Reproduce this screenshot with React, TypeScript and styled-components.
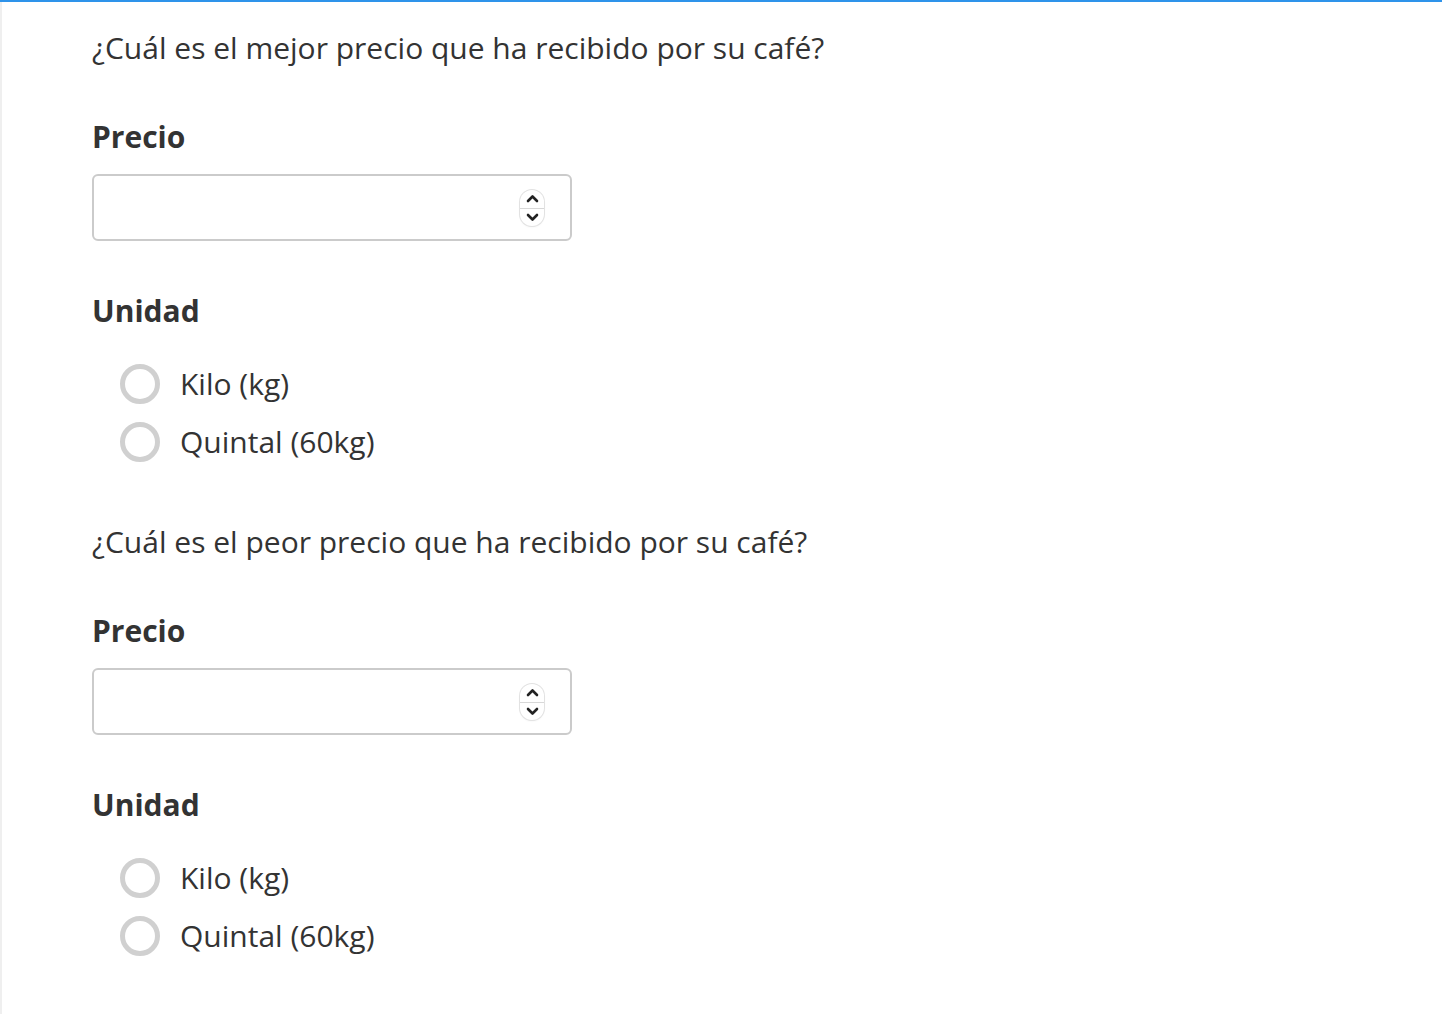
import React from "react";
import styled, { createGlobalStyle } from "styled-components";

const Global = createGlobalStyle`
  html, body { margin: 0; padding: 0; background: #fff; }
  body { font-family: "Open Sans", "Liberation Sans", sans-serif; color: #333; }
`;

const Page = styled.div`
  min-height: 1014px;
  box-sizing: border-box;
  border-top: 2px solid #2e93ea;
  display: flex;
`;

const SideStripe = styled.div`
  width: 2px;
  background: #efefef;
  flex: none;
`;

const Content = styled.main`
  flex: 1;
  padding: 26px 0 0 90px;
  display: flex;
  flex-direction: column;
`;

const Block = styled.section`
  display: flex;
  flex-direction: column;
  height: 494px;
`;

const Question = styled.p`
  margin: 0;
  font-size: 30px;
  line-height: 40px;
  font-weight: 400;
`;

const FieldLabel = styled.label<{ $top: number }>`
  display: block;
  font-size: 30px;
  line-height: 40px;
  font-weight: 700;
  margin-top: ${(p) => p.$top}px;
`;

const InputWrap = styled.div`
  position: relative;
  width: 480px;
  height: 67px;
  margin-top: 17px;
`;

const NumberInput = styled.input`
  width: 100%;
  height: 100%;
  box-sizing: border-box;
  border: 2px solid #cbcbcb;
  border-radius: 6px;
  background: #fff;
  font: inherit;
  font-size: 26px;
  padding: 0 60px 0 16px;
  outline: none;
`;

const Spinner = styled.div`
  position: absolute;
  right: 28px;
  top: 16px;
  width: 24px;
  height: 36px;
  border-radius: 12px;
  box-shadow: 0 0 0 1px #e2e2e2, 0 1px 2px rgba(0, 0, 0, 0.08);
  background: #fff;
  display: flex;
  flex-direction: column;
  overflow: hidden;
`;

const SpinHalf = styled.div<{ $top?: boolean }>`
  flex: 1;
  display: flex;
  align-items: center;
  justify-content: center;
  border-bottom: ${(p) => (p.$top ? "1px solid #d8d8d8" : "none")};
`;

const RadioList = styled.div`
  display: flex;
  flex-direction: column;
  gap: 18px;
  margin-top: 33px;
  padding-left: 28px;
`;

const RadioRow = styled.label`
  display: flex;
  align-items: center;
  gap: 20px;
  font-size: 30px;
  line-height: 40px;
  cursor: pointer;
`;

const RadioCircle = styled.span`
  width: 40px;
  height: 40px;
  box-sizing: border-box;
  border: 5px solid #d0d0d0;
  border-radius: 50%;
  background: #fff;
  flex: none;
`;

const Chevron = ({ up }: { up?: boolean }) => (
  <svg width="13" height="9" viewBox="0 0 13 9" fill="none">
    <path
      d={up ? "M2 7 L6.5 2.5 L11 7" : "M2 2 L6.5 6.5 L11 2"}
      stroke="#222"
      strokeWidth="2.6"
      strokeLinecap="round"
      strokeLinejoin="round"
    />
  </svg>
);

const PriceBlock = ({ question }: { question: string }) => (
  <Block>
    <Question>{question}</Question>
    <FieldLabel $top={49}>Precio</FieldLabel>
    <InputWrap>
      <NumberInput type="text" inputMode="decimal" />
      <Spinner>
        <SpinHalf $top>
          <Chevron up />
        </SpinHalf>
        <SpinHalf>
          <Chevron />
        </SpinHalf>
      </Spinner>
    </InputWrap>
    <FieldLabel $top={50}>Unidad</FieldLabel>
    <RadioList>
      <RadioRow>
        <RadioCircle />
        Kilo (kg)
      </RadioRow>
      <RadioRow>
        <RadioCircle />
        Quintal (60kg)
      </RadioRow>
    </RadioList>
  </Block>
);

export default function App() {
  return (
    <>
      <Global />
      <Page>
        <SideStripe />
        <Content>
          <PriceBlock question="¿Cuál es el mejor precio que ha recibido por su café?" />
          <PriceBlock question="¿Cuál es el peor precio que ha recibido por su café?" />
        </Content>
      </Page>
    </>
  );
}
